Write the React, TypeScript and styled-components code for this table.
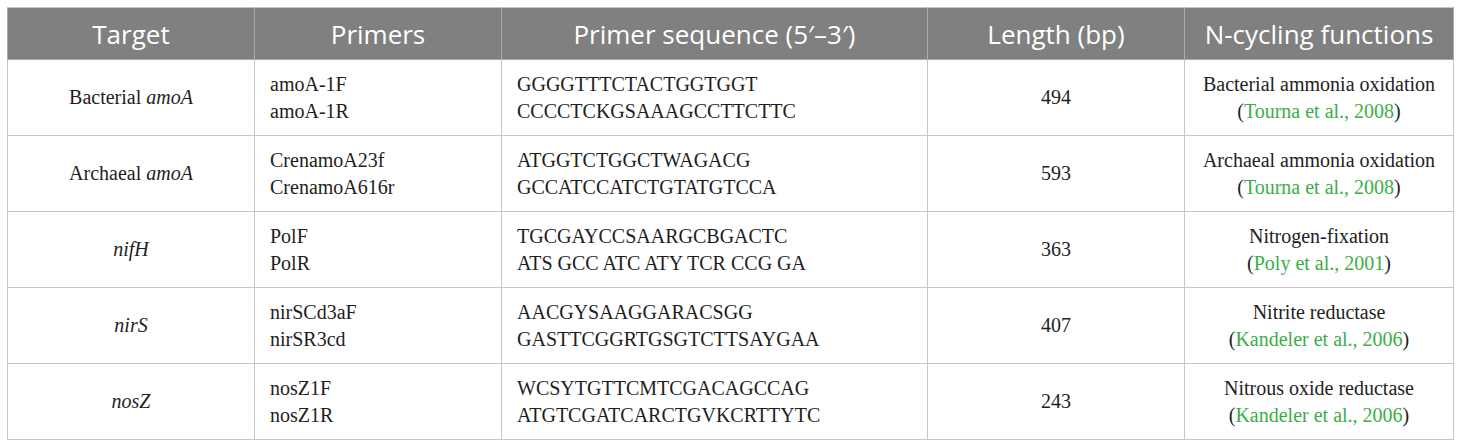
import React from "react";
import styled, { createGlobalStyle } from "styled-components";

const Global = createGlobalStyle`
  html, body { margin: 0; padding: 0; background: #ffffff; }
  body { font-family: "Liberation Serif", "Times New Roman", serif; }
`;

const Wrap = styled.div`
  padding: 7px;
`;

const Table = styled.table`
  border-collapse: collapse;
  table-layout: fixed;
  width: 1446px;
  border: 1px solid #c7c7c7;
`;

const Th = styled.th`
  height: 51px;
  padding: 0;
  background: #808080;
  color: #ffffff;
  font-family: "Open Sans", "Noto Sans", sans-serif;
  font-weight: 400;
  font-size: 26px;
  text-align: center;
  vertical-align: middle;
  border: 1px solid #a9a9a9;
  border-top-color: #c7c7c7;
  white-space: nowrap;
`;

const Td = styled.td<{ $align?: "left" | "center" }>`
  height: 76px;
  box-sizing: border-box;
  padding: 0 15px;
  font-size: 20px;
  line-height: 27px;
  color: #1e1e1e;
  text-align: ${(p) => p.$align ?? "center"};
  vertical-align: middle;
  border: 1px solid #c7c7c7;
`;

const Line = styled.div`
  white-space: nowrap;
`;

const Ref = styled.span`
  color: #3aae48;
`;

type Row = {
  target: React.ReactNode;
  primers: [string, string];
  seq: [string, string];
  len: string;
  fn: string;
  ref: string;
};

const rows: Row[] = [
  {
    target: (
      <>
        Bacterial <i>amoA</i>
      </>
    ),
    primers: ["amoA-1F", "amoA-1R"],
    seq: ["GGGGTTTCTACTGGTGGT", "CCCCTCKGSAAAGCCTTCTTC"],
    len: "494",
    fn: "Bacterial ammonia oxidation",
    ref: "Tourna et al., 2008",
  },
  {
    target: (
      <>
        Archaeal <i>amoA</i>
      </>
    ),
    primers: ["CrenamoA23f", "CrenamoA616r"],
    seq: ["ATGGTCTGGCTWAGACG", "GCCATCCATCTGTATGTCCA"],
    len: "593",
    fn: "Archaeal ammonia oxidation",
    ref: "Tourna et al., 2008",
  },
  {
    target: <i>nifH</i>,
    primers: ["PolF", "PolR"],
    seq: ["TGCGAYCCSAARGCBGACTC", "ATS GCC ATC ATY TCR CCG GA"],
    len: "363",
    fn: "Nitrogen-fixation",
    ref: "Poly et al., 2001",
  },
  {
    target: <i>nirS</i>,
    primers: ["nirSCd3aF", "nirSR3cd"],
    seq: ["AACGYSAAGGARACSGG", "GASTTCGGRTGSGTCTTSAYGAA"],
    len: "407",
    fn: "Nitrite reductase",
    ref: "Kandeler et al., 2006",
  },
  {
    target: <i>nosZ</i>,
    primers: ["nosZ1F", "nosZ1R"],
    seq: ["WCSYTGTTCMTCGACAGCCAG", "ATGTCGATCARCTGVKCRTTYTC"],
    len: "243",
    fn: "Nitrous oxide reductase",
    ref: "Kandeler et al., 2006",
  },
];

export default function App() {
  return (
    <>
      <Global />
      <Wrap>
        <Table>
          <colgroup>
            <col style={{ width: 247 }} />
            <col style={{ width: 247 }} />
            <col style={{ width: 426 }} />
            <col style={{ width: 257 }} />
            <col style={{ width: 269 }} />
          </colgroup>
          <thead>
            <tr>
              <Th>Target</Th>
              <Th>Primers</Th>
              <Th>Primer sequence (5′–3′)</Th>
              <Th>Length (bp)</Th>
              <Th>N-cycling functions</Th>
            </tr>
          </thead>
          <tbody>
            {rows.map((r, i) => (
              <tr key={i}>
                <Td>{r.target}</Td>
                <Td $align="left">
                  <Line>{r.primers[0]}</Line>
                  <Line>{r.primers[1]}</Line>
                </Td>
                <Td $align="left">
                  <Line>{r.seq[0]}</Line>
                  <Line>{r.seq[1]}</Line>
                </Td>
                <Td>{r.len}</Td>
                <Td>
                  <Line>{r.fn}</Line>
                  <Line>
                    (<Ref>{r.ref}</Ref>)
                  </Line>
                </Td>
              </tr>
            ))}
          </tbody>
        </Table>
      </Wrap>
    </>
  );
}
